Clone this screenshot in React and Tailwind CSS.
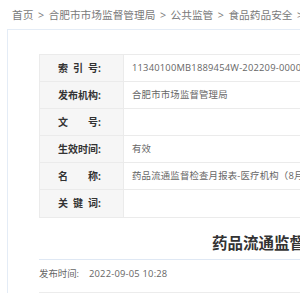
import React from 'react';

const rows = [
  { label: ['索', '引', '号'], value: '11340100MB1889454W-202209-00001' },
  { label: ['发', '布', '机', '构'], value: '合肥市市场监督管理局' },
  { label: ['文', '号'], value: '' },
  { label: ['生', '效', '时', '间'], value: '有效' },
  { label: ['名', '称'], value: '药品流通监督检查月报表-医疗机构（8月）' },
  { label: ['关', '键', '词'], value: '' },
];

const crumbs = ['首页', '合肥市市场监督管理局', '公共监管', '食品药品安全', '信息公开'];

const App = () => {
  return (
    <div
      className="w-[300px] h-[300px] overflow-hidden bg-white"
      style={{ fontFamily: '"Open Sans", "Noto Sans CJK SC", sans-serif' }}
    >
      <div className="w-[1100px] pt-[8px]">
        <div className="pl-[12px] text-[10.7px] leading-[14px] text-[#7a7a7a] whitespace-nowrap">
          {crumbs.map((c, i) => (
            <span key={c}>
              {i > 0 && <span className="px-[4.5px]">&gt;</span>}
              {c}
            </span>
          ))}
        </div>

        <div className="ml-[7px] mt-[7px] border-t border-l border-[#e4ecf6] pl-[31px] pt-[24px]">
          <div className="w-[900px] border border-[#ebebeb]">
            {rows.map((r, i) => (
              <div
                key={i}
                className="flex h-[27px] border-b border-[#ebebeb] last:border-b-0"
              >
                <div className="w-[84px] shrink-0 flex items-center pl-[18px] bg-[#f6f6f6] border-r border-[#ebebeb] text-[10px] font-bold text-[#333]">
                  <span className="w-[40px] flex justify-between">
                    {r.label.map((ch, j) => (
                      <span key={j}>{ch}</span>
                    ))}
                  </span>
                  <span>:</span>
                </div>
                <div className="flex items-center pl-[8px] text-[9.4px] tracking-[0.2px] text-[#666] whitespace-nowrap">
                  {r.value}
                </div>
              </div>
            ))}
          </div>

          <div className="w-[900px] mt-[15px] pl-[173px] pb-[6px] border-b border-[#dfe8f4] text-[15.5px] leading-[20px] font-bold text-[#333] whitespace-nowrap">
            药品流通监督检查月报表-医疗机构（8月）
          </div>

          <div className="w-[900px] mt-[7px] pb-[11px] border-b border-[#ececec] text-[9.4px] leading-[14px] text-[#666] whitespace-nowrap">
            发布时间:<span className="ml-[10px] tracking-[0.2px]">2022-09-05 10:28</span>
          </div>
        </div>
      </div>
    </div>
  );
};

export default App;
